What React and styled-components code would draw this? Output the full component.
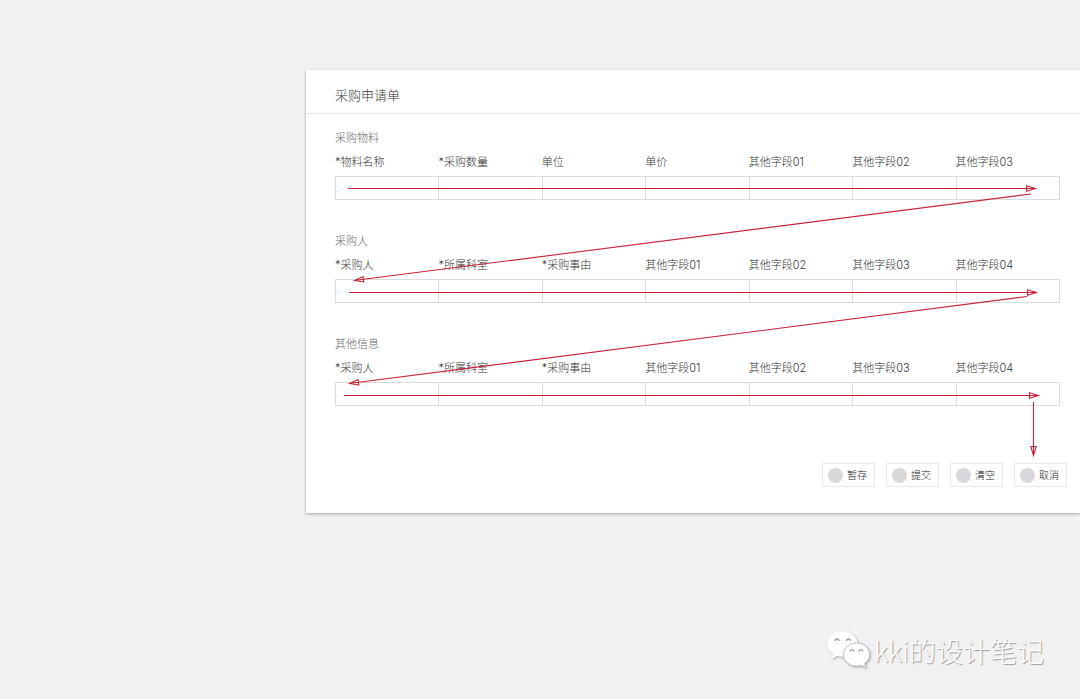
import React from "react";
import styled, { createGlobalStyle } from "styled-components";

const GlobalStyle = createGlobalStyle`
  * { box-sizing: border-box; }
  body {
    margin: 0;
    background: #f1f1f1;
    color: #555;
    font-family: "Noto Sans CJK SC", sans-serif;
    font-weight: 300;
  }
`;

const Page = styled.div`
  display: flex;
  flex-direction: column;
  min-height: 100vh;
  padding: 70px 0 28px;
  overflow: hidden;
`;

const Card = styled.form`
  margin-left: 306px;
  background: #fff;
  box-shadow: 0 1px 3px rgba(0, 0, 0, 0.32);
`;

const CardHeader = styled.header`
  padding: 15px 29px 8px;
  border-bottom: 1px solid #e6e6e6;
`;

const Title = styled.h1`
  margin: 0;
  color: #333;
  font-size: 13px;
  line-height: 20px;
  font-weight: 300;
`;

const Sections = styled.div`
  position: relative;
  display: flex;
  flex-direction: column;
  gap: 32px;
  margin: 0 20px 0 29px;
  padding: 15px 0 57px;
`;

const SectionTitle = styled.h2`
  margin: 0 0 9px;
  color: #666;
  font-size: 11px;
  line-height: 16px;
  font-weight: 300;
`;

const Fields = styled.div`
  display: grid;
  grid-template-columns: repeat(7, 1fr);
  padding-right: 1px;
`;

const Input = styled.input`
  width: 100%;
  height: 24px;
  padding: 0 8px;
  border: 1px solid #dcdcdc;
  border-right-width: 0;
  border-radius: 0;
  background: transparent;
  font: inherit;
  outline: none;
`;

const Field = styled.label`
  display: flex;
  flex-direction: column;
  gap: 6px;
  color: #333;
  font-family: "Inter", "Noto Sans CJK SC", sans-serif;
  font-size: 11px;
  line-height: 16px;
  white-space: nowrap;

  &:last-child ${Input} {
    width: calc(100% + 1px);
    border-right-width: 1px;
  }
`;

const Flow = styled.svg`
  position: absolute;
  inset: 0;
  width: 100%;
  height: 100%;
  overflow: visible;
  pointer-events: none;
  fill: none;
  stroke: #c8253c;
  stroke-width: 1.1;
`;

const Actions = styled.div`
  display: flex;
  justify-content: flex-end;
  gap: 11px;
  padding: 0 13px 26px;
`;

const Button = styled.button`
  display: flex;
  align-items: center;
  gap: 4px;
  height: 24px;
  padding: 0 7px 0 5px;
  border: 1px solid #e9e9e9;
  background: #fff;
  color: #222;
  font: inherit;
  font-size: 10px;
  line-height: 16px;
`;

const Dot = styled.span`
  width: 15px;
  height: 15px;
  border-radius: 50%;
  background: #d8d8d8;
`;

const Watermark = styled.footer`
  display: flex;
  align-items: center;
  align-self: flex-end;
  gap: 4px;
  margin-top: auto;
  padding-right: 36px;
  color: #fff;
  font-size: 27px;
  line-height: 40px;
  text-shadow: 1px 1px 1px #999;
`;

const Logo = styled.svg`
  width: 43px;
  height: 40px;
  overflow: visible;
`;

const Bubble = styled.path`
  fill: #fff;
  filter: drop-shadow(1px 1px 1px #aaa);
`;

const sections = [
  {
    title: "采购物料",
    fields: ["*物料名称", "*采购数量", "单位", "单价", "其他字段01", "其他字段02", "其他字段03"],
  },
  {
    title: "采购人",
    fields: ["*采购人", "*所属科室", "*采购事由", "其他字段01", "其他字段02", "其他字段03", "其他字段04"],
  },
  {
    title: "其他信息",
    fields: ["*采购人", "*所属科室", "*采购事由", "其他字段01", "其他字段02", "其他字段03", "其他字段04"],
  },
];

const actions = ["暂存", "提交", "清空", "取消"];

const arrows = [
  [13, 74.5, 701, 74.5],
  [696, 80, 19, 166.5],
  [14, 178.5, 702, 178.5],
  [692, 182.5, 14, 269.5],
  [9, 281.5, 704, 281.5],
  [698.5, 288, 698.5, 342],
];

function Arrow({ points: [x1, y1, x2, y2] }) {
  const angle = (Math.atan2(y2 - y1, x2 - x1) * 180) / Math.PI;
  const length = Math.hypot(x2 - x1, y2 - y1);
  return (
    <g transform={`translate(${x1} ${y1}) rotate(${angle})`}>
      <path d={`M0 0H${length}M${length - 9.5} -2.7L${length - 0.5} 0L${length - 9.5} 2.7Z`} />
    </g>
  );
}

export default function App() {
  return (
    <>
      <GlobalStyle />
      <Page>
        <Card onSubmit={(e) => e.preventDefault()}>
          <CardHeader>
            <Title>采购申请单</Title>
          </CardHeader>
          <Sections>
            {sections.map((section) => (
              <section key={section.title}>
                <SectionTitle>{section.title}</SectionTitle>
                <Fields>
                  {section.fields.map((name) => (
                    <Field key={name}>
                      {name}
                      <Input type="text" />
                    </Field>
                  ))}
                </Fields>
              </section>
            ))}
            <Flow viewBox="0 0 725 349" preserveAspectRatio="none" aria-hidden="true">
              {arrows.map((points) => (
                <Arrow key={points.join()} points={points} />
              ))}
            </Flow>
          </Sections>
          <Actions>
            {actions.map((name) => (
              <Button type="button" key={name}>
                <Dot />
                {name}
              </Button>
            ))}
          </Actions>
        </Card>
        <Watermark>
          <Logo viewBox="0 0 43 40" aria-hidden="true">
            <Bubble d="M15.5 0C7 0 .5 5.800.5 13c0 4.200 2.200 7.600 5.600 10l-1.600 4.800 5.600-2.800c1.800.6 3.600.8 5.400.8 8.300 0 15-5.600 15-12.800S23.800 0 15.500 0Z" />
            <Bubble
              stroke="#c4c4c4"
              strokeWidth="1"
              d="M29.500 12C22.300 12 16.500 17 16.500 23.500S22.300 35 29.500 35c1.700 0 3.300-.3 4.700-.8l4.600 2.500-1.300-4.100c3.100-2.100 5-5.300 5-9.100C42.500 17 36.700 12 29.500 12Z"
            />
            <g fill="#f1f1f1" stroke="#999" strokeWidth="1.2">
              <path d="M8 10a2 2.200 0 1 1 4 0M19.500 10a2 2.200 0 1 1 4 0" />
              <path d="M23.200 20.500a1.800 2 0 1 1 3.600 0M32.200 20.500a1.800 2 0 1 1 3.600 0" />
            </g>
          </Logo>
          <span>kki的设计笔记</span>
        </Watermark>
      </Page>
    </>
  );
}
